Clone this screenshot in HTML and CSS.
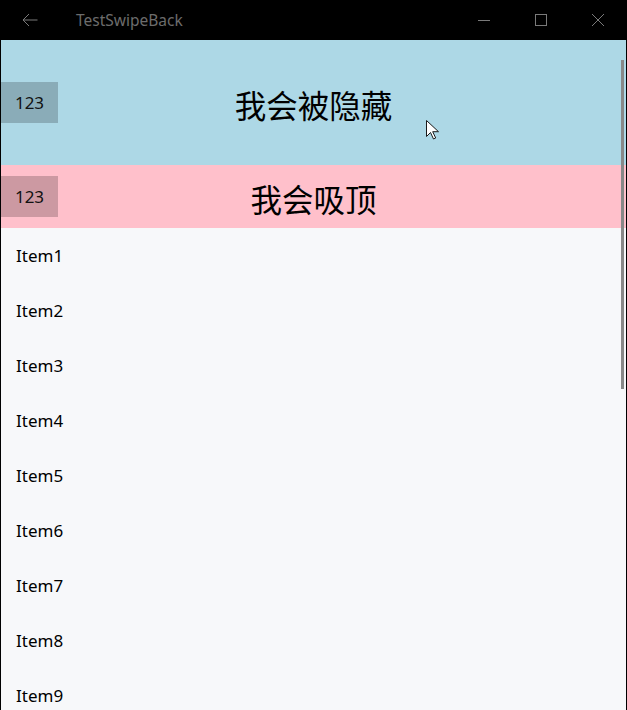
FILE: index.html
```html
<!DOCTYPE html>
<html lang="zh-CN">
<head>
    <meta charset="UTF-8">
    <meta name="viewport" content="width=device-width, initial-scale=1.0">
    <title>TestSwipeBack</title>
    <link rel="stylesheet" href="styles.css">
</head>
<body>
    <div class="window">
        <div class="titlebar">
            <button class="back-btn" aria-label="Back">
                <svg width="16" height="14" viewBox="0 0 16 14">
                    <path d="M15.5 7H1M7 1L1 7l6 6" fill="none" stroke="#7a7a7a" stroke-width="1"/>
                </svg>
            </button>
            <span class="app-title">TestSwipeBack</span>
            <div class="caption-buttons">
                <span class="caption-btn">
                    <svg width="12" height="12" viewBox="0 0 12 12"><path d="M0 6.5h12" stroke="#7a7a7a" stroke-width="1"/></svg>
                </span>
                <span class="caption-btn">
                    <svg width="12" height="12" viewBox="0 0 12 12"><rect x="0.5" y="0.5" width="11" height="11" fill="none" stroke="#7a7a7a" stroke-width="1"/></svg>
                </span>
                <span class="caption-btn">
                    <svg width="12" height="12" viewBox="0 0 12 12"><path d="M0 0l12 12M12 0L0 12" stroke="#7a7a7a" stroke-width="1"/></svg>
                </span>
            </div>
        </div>

        <div class="page">
            <div class="header header-hidden">
                <span class="tag">123</span>
                <span class="header-text">我会被隐藏</span>
            </div>
            <div class="header header-sticky">
                <span class="tag">123</span>
                <span class="header-text">我会吸顶</span>
            </div>
            <ul class="item-list">
                <li>Item1</li>
                <li>Item2</li>
                <li>Item3</li>
                <li>Item4</li>
                <li>Item5</li>
                <li>Item6</li>
                <li>Item7</li>
                <li>Item8</li>
                <li>Item9</li>
            </ul>
        </div>

        <!-- overlay scrollbar thumb -->
        <div class="scroll-thumb"></div>

        <!-- mouse pointer -->
        <svg class="pointer" width="13" height="20" viewBox="0 0 13 20">
            <path d="M0.5 0.5v16l4-4 3 6.5 2.2-1-3-6.3h5.8z" fill="#fff" stroke="#1a1a1a" stroke-width="1" stroke-linejoin="miter"/>
        </svg>
    </div>
</body>
</html>
```

FILE: styles.css
```css
body {
    margin: 0;
    padding: 0;
    background: #000;
    font-family: 'Noto Sans', 'Noto Sans CJK SC', sans-serif;
}
.window {
    position: relative;
    width: 627px;
    height: 710px;
    overflow: hidden;
    background: #000;
}
.titlebar {
    display: flex;
    align-items: center;
    height: 40px;
    background: #000;
    color: #6f6f6f;
}
.back-btn {
    width: 61px;
    height: 40px;
    padding: 0 0 0 22px;
    display: flex;
    align-items: center;
    background: none;
    border: none;
}
.app-title {
    margin-left: 15px;
    font-size: 15.5px;
    color: #6c6c6c;
}
.caption-buttons {
    display: flex;
    margin-left: auto;
    margin-right: 1px;
}
.caption-btn {
    width: 57px;
    height: 40px;
    display: flex;
    align-items: center;
    justify-content: center;
}
.caption-btn svg {
    display: block;
}
.page {
    margin: 0 1px;
    height: 670px;
    background: #f7f8fa;
    overflow: hidden;
}
.header {
    display: grid;
    align-items: center;
}
.header > * {
    grid-area: 1 / 1;
}
.header-hidden {
    height: 125px;
    background: #add8e6;
}
.header-sticky {
    height: 63px;
    background: #ffc0cb;
}
.tag {
    justify-self: start;
    width: 57px;
    height: 41px;
    line-height: 41px;
    text-align: center;
    font-size: 17px;
    color: #111;
    background: rgba(0, 0, 0, 0.2);
}
.header-text {
    justify-self: center;
    padding-top: 3px;
    font-family: 'Noto Sans CJK SC', sans-serif;
    font-size: 31.5px;
    line-height: 40px;
    color: #000;
}
.item-list {
    list-style: none;
    margin: 0;
    padding: 0;
}
.item-list li {
    height: 55px;
    line-height: 56px;
    padding-left: 15px;
    font-size: 17px;
    color: #000;
}
.scroll-thumb {
    position: absolute;
    left: 621px;
    top: 60px;
    width: 3px;
    height: 329px;
    background: #888;
}
.pointer {
    position: absolute;
    left: 426px;
    top: 120px;
}
```
